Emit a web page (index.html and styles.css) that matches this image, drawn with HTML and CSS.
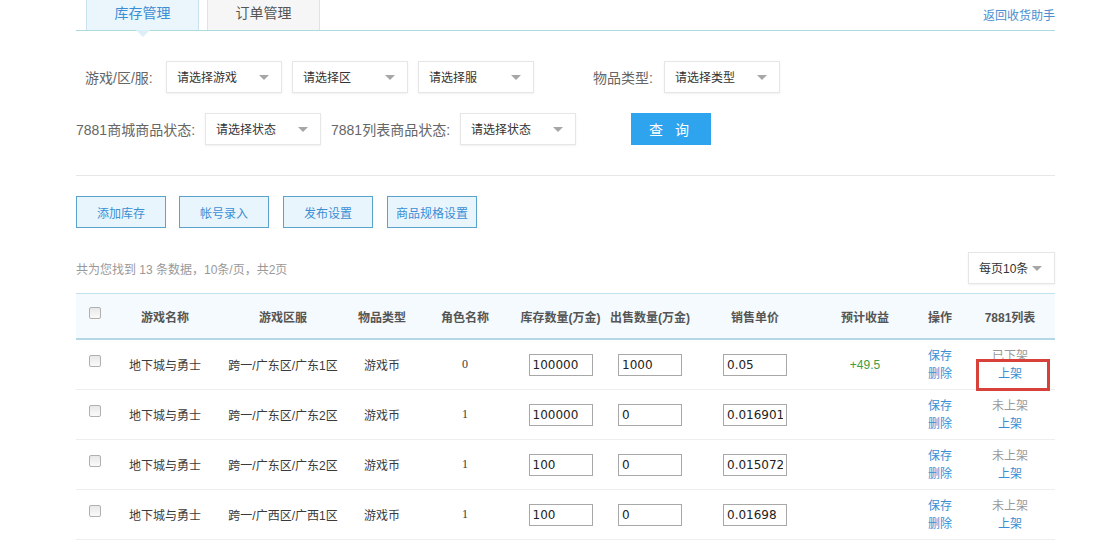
FILE: index.html
```html
<!DOCTYPE html>
<html lang="zh-CN">
<head>
  <meta charset="UTF-8" />
  <title>库存管理</title>
  <link rel="stylesheet" href="styles.css">
</head>
<body>
  <div class="wrap">
    <div class="tabbar">
      <div class="tab active">库存管理</div>
      <div class="tab">订单管理</div>
      <a class="back" href="#">返回收货助手</a>
    </div>

    <div class="filter first">
      <span class="label indent">游戏/区/服:</span>
      <div class="select">请选择游戏<i class="arrow"></i></div>
      <div class="select">请选择区<i class="arrow"></i></div>
      <div class="select">请选择服<i class="arrow"></i></div>
      <span class="label type">物品类型:</span>
      <div class="select">请选择类型<i class="arrow"></i></div>
    </div>

    <div class="filter second">
      <span class="label status">7881商城商品状态:</span>
      <div class="select">请选择状态<i class="arrow"></i></div>
      <span class="label status">7881列表商品状态:</span>
      <div class="select">请选择状态<i class="arrow"></i></div>
      <button class="search">查 询</button>
    </div>

    <div class="sep"></div>

    <div class="actions">
      <button class="btn">添加库存</button>
      <button class="btn">帐号录入</button>
      <button class="btn">发布设置</button>
      <button class="btn">商品规格设置</button>
    </div>

    <div class="info">
      <span class="count">共为您找到 13 条数据，10条/页，共2页</span>
      <div class="select small">每页10条<i class="arrow"></i></div>
    </div>

    <table class="grid">
      <colgroup>
        <col class="c-chk"><col class="c-game"><col class="c-area"><col class="c-type">
        <col class="c-role"><col class="c-stock"><col class="c-sell"><col class="c-price">
        <col class="c-gain"><col class="c-op"><col class="c-list">
      </colgroup>
      <thead>
        <tr>
          <th><span class="chk"></span></th>
          <th>游戏名称</th>
          <th>游戏区服</th>
          <th>物品类型</th>
          <th>角色名称</th>
          <th>库存数量(万金)</th>
          <th>出售数量(万金)</th>
          <th>销售单价</th>
          <th>预计收益</th>
          <th>操作</th>
          <th>7881列表</th>
        </tr>
      </thead>
      <tbody>
        <tr>
          <td><span class="chk"></span></td>
          <td>地下城与勇士</td>
          <td>跨一/广东区/广东1区</td>
          <td>游戏币</td>
          <td class="num">0</td>
          <td><input class="cell-input" type="text" value="100000"></td>
          <td><input class="cell-input" type="text" value="1000"></td>
          <td><input class="cell-input" type="text" value="0.05"></td>
          <td class="gain">+49.5</td>
          <td class="op"><a href="#">保存</a><a href="#">删除</a></td>
          <td class="list"><div class="list-box"><span class="state">已下架</span><a href="#">上架</a><span class="mark"></span></div></td>
        </tr>
        <tr>
          <td><span class="chk"></span></td>
          <td>地下城与勇士</td>
          <td>跨一/广东区/广东2区</td>
          <td>游戏币</td>
          <td class="num">1</td>
          <td><input class="cell-input" type="text" value="100000"></td>
          <td><input class="cell-input" type="text" value="0"></td>
          <td><input class="cell-input" type="text" value="0.016901"></td>
          <td class="gain"></td>
          <td class="op"><a href="#">保存</a><a href="#">删除</a></td>
          <td class="list"><div class="list-box"><span class="state">未上架</span><a href="#">上架</a></div></td>
        </tr>
        <tr>
          <td><span class="chk"></span></td>
          <td>地下城与勇士</td>
          <td>跨一/广东区/广东2区</td>
          <td>游戏币</td>
          <td class="num">1</td>
          <td><input class="cell-input" type="text" value="100"></td>
          <td><input class="cell-input" type="text" value="0"></td>
          <td><input class="cell-input" type="text" value="0.015072"></td>
          <td class="gain"></td>
          <td class="op"><a href="#">保存</a><a href="#">删除</a></td>
          <td class="list"><div class="list-box"><span class="state">未上架</span><a href="#">上架</a></div></td>
        </tr>
        <tr>
          <td><span class="chk"></span></td>
          <td>地下城与勇士</td>
          <td>跨一/广西区/广西1区</td>
          <td>游戏币</td>
          <td class="num">1</td>
          <td><input class="cell-input" type="text" value="100"></td>
          <td><input class="cell-input" type="text" value="0"></td>
          <td><input class="cell-input" type="text" value="0.01698"></td>
          <td class="gain"></td>
          <td class="op"><a href="#">保存</a><a href="#">删除</a></td>
          <td class="list"><div class="list-box"><span class="state">未上架</span><a href="#">上架</a></div></td>
        </tr>
      </tbody>
    </table>
  </div>
</body>
</html>
```

FILE: styles.css
```css
body {
  margin: 0;
  background: #fff;
  color: #333;
  font-family: "Liberation Sans", "Noto Sans CJK SC", sans-serif;
  font-size: 12px;
}

a {
  color: #3a8ed4;
  text-decoration: none;
}

.wrap {
  width: 979px;
  margin-left: 76px;
}

/* tabs */
.tabbar {
  display: flex;
  align-items: flex-end;
  height: 30px;
  border-bottom: 1px solid #a9dbdf;
  position: relative;
}

.tab {
  width: 111px;
  height: 30px;
  line-height: 27px;
  text-align: center;
  font-size: 14px;
  color: #555;
  background: #f6f6f6;
  border: 1px solid #e2e2e2;
  border-top: none;
  border-bottom: none;
  margin-right: 8px;
  position: relative;
}

.tab:first-child {
  margin-left: 10px;
}

.tab.active {
  color: #3a8ed4;
  background: #eaf5fc;
  border-color: #c8e2ef;
}

.tab.active::after {
  content: "";
  position: absolute;
  left: 50%;
  bottom: -7px;
  margin-left: -7px;
  border-left: 7px solid transparent;
  border-right: 7px solid transparent;
  border-top: 7px solid #dceef8;
}

.back {
  margin-left: auto;
  align-self: center;
  margin-top: -2px;
  font-size: 12px;
  color: #4a8fd0;
}

/* filters */
.filter {
  display: flex;
  align-items: center;
  height: 32px;
}

.filter.first {
  margin-top: 30px;
}

.filter.second {
  margin-top: 20px;
}

.label {
  color: #666;
  font-size: 14px;
  margin-right: 8px;
}

.label.indent {
  margin-left: 9px;
  width: 72px;
  margin-right: 9px;
}

.label.type {
  margin-left: 49px;
  width: 62px;
  margin-right: 9px;
}

.label.status {
  width: 121px;
  margin-right: 8px;
}

.select {
  position: relative;
  box-sizing: border-box;
  width: 116px;
  height: 32px;
  line-height: 32px;
  padding-left: 10px;
  margin-right: 10px;
  border: 1px solid #e6e6e6;
  box-shadow: 0 1px 2px rgba(0, 0, 0, 0.06);
  background: #fff;
  color: #333;
  font-size: 12px;
}

.arrow {
  position: absolute;
  right: 12px;
  top: 13px;
  border-left: 5px solid transparent;
  border-right: 5px solid transparent;
  border-top: 5px solid #a6a6a6;
}

.search {
  margin-left: 45px;
  width: 80px;
  height: 32px;
  border: none;
  background: #2fa4ee;
  color: #fff;
  font-family: inherit;
  font-size: 14px;
  letter-spacing: 4px;
  padding-left: 6px;
}

.sep {
  margin-top: 30px;
  border-top: 1px solid #e6e6e6;
}

/* action buttons */
.actions {
  display: flex;
  gap: 14px;
  margin-top: 20px;
}

.btn {
  width: 90px;
  height: 32px;
  padding: 0;
  border: 1px solid #5ba2cd;
  background: #e9f5fd;
  color: #3a8ed4;
  font-family: inherit;
  font-size: 12px;
}

.btn:first-child {
  margin-right: -1px;
}

.info {
  display: flex;
  justify-content: space-between;
  align-items: center;
  margin-top: 24px;
}

.count {
  color: #999;
}

.select.small {
  width: 87px;
  margin-right: 0;
}

/* table */
.grid {
  width: 979px;
  margin-top: 9px;
  border-collapse: collapse;
  table-layout: fixed;
}

.c-chk { width: 38px; }
.c-game { width: 102px; }
.c-area { width: 134px; }
.c-type { width: 64px; }
.c-role { width: 102px; }
.c-stock { width: 89px; }
.c-sell { width: 90px; }
.c-price { width: 120px; }
.c-gain { width: 100px; }
.c-op { width: 50px; }
.c-list { width: 90px; }

.grid th {
  height: 44px;
  background: #f4fafd;
  border-top: 1px solid #c2e0ed;
  border-bottom: 2px solid #b4d6e5;
  color: #555;
  font-weight: bold;
  text-align: center;
  padding: 0;
}

.grid td {
  height: 49px;
  border-bottom: 1px solid #eee;
  text-align: center;
  padding: 0;
  color: #3a3a3a;
}

.chk {
  display: inline-block;
  box-sizing: border-box;
  width: 12px;
  height: 12px;
  border: 1px solid #b0b0b0;
  border-radius: 2px;
  background: linear-gradient(#e8e8e8, #fafafa);
  vertical-align: middle;
  margin-top: -8px;
}

.grid td.num {
  font-family: "Liberation Serif", serif;
}

.cell-input {
  box-sizing: border-box;
  width: 64px;
  height: 22px;
  border: 1px solid #a8a8a8;
  padding: 0 3px;
  font-family: "DejaVu Sans", sans-serif;
  font-size: 12px;
  color: #222;
}

.grid td.gain {
  color: #3f9c3f;
}

.op a,
.list-box a,
.list-box .state {
  display: block;
  line-height: 18px;
}

.op a {
  text-align: left;
  padding-left: 13px;
}

.list-box {
  position: relative;
}

.list-box .state {
  color: #999;
}

.mark {
  position: absolute;
  left: 11px;
  top: 12px;
  width: 68px;
  height: 26px;
  border: 3px solid #d8403a;
}
```
